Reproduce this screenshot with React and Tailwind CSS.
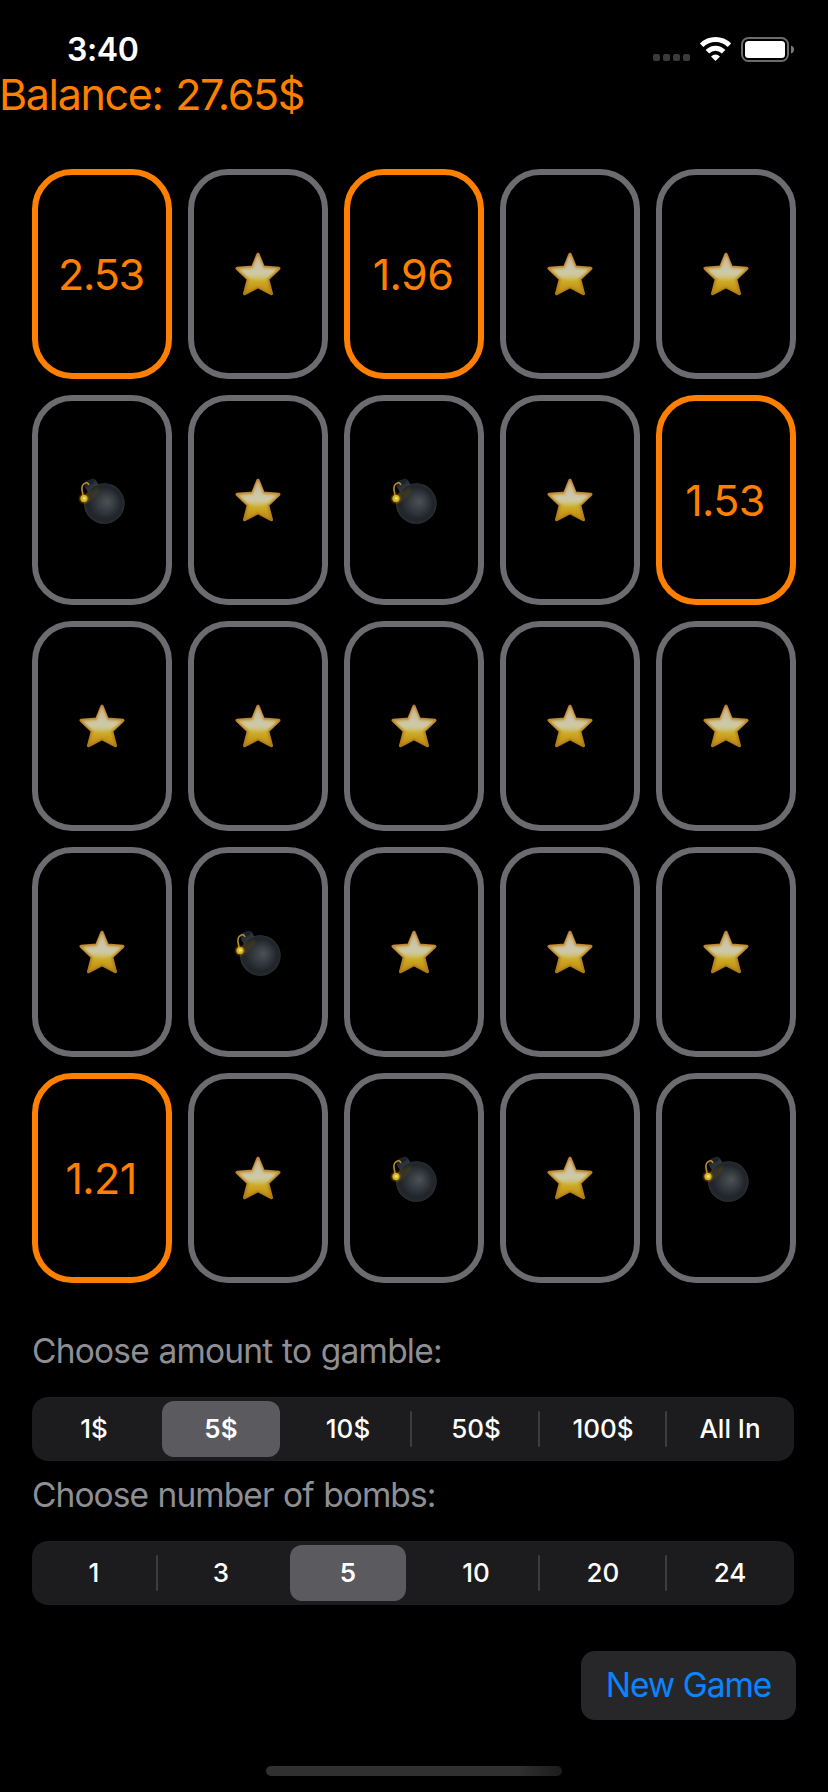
const rows = [
  ['2.53', 's', '1.96', 's', 's'],
  ['b', 's', 'b', 's', '1.53'],
  ['s', 's', 's', 's', 's'],
  ['s', 'b', 's', 's', 's'],
  ['1.21', 's', 'b', 's', 'b'],
];

function Star() {
  return (
    <svg viewBox="0 0 46 46" className="h-[46px] w-[46px]">
      <path d="M23 3.3 28.2 16.2 43.9 17.3 32.6 28 36.4 42.7 23 35.6 9.6 42.7 13.4 28 2.1 17.3 17.8 16.2Z" fill="url(#starRim)" stroke="url(#starRim)" strokeWidth="3.2" strokeLinejoin="round" />
      <path d="M23 4.5 28 17.2 42 18.2 31.6 28 35.2 41.6 23 34.8 10.8 41.6 14.4 28 4 18.2 18 17.2Z" fill="url(#starFill)" stroke="url(#starFill)" strokeWidth="1.4" filter="url(#soft)" />
      <path d="M23 5.5 27.8 17.8 40.5 19 31.2 27.3Q23 31.5 14.8 27.3L5.5 19 18.2 17.8Z" fill="url(#starGloss)" filter="url(#soft)" />
    </svg>
  );
}

function Bomb() {
  return (
    <svg viewBox="0 0 90 80" className="h-[80px] w-[90px] shrink-0 translate-x-[3px]">
      <path d="M24.5 23.5Q25 21 28 20.3L32 18.9Q34.5 18.4 36 20.6L39.5 26.2 29.5 34 25.2 28Z" fill="url(#neck)" />
      <ellipse cx="30" cy="22.4" rx="5" ry="2.3" transform="rotate(-24 30 22.4)" fill="#1b222a" />
      <circle cx="44.3" cy="43.5" r="20.3" fill="url(#ball)" />
      <path d="M27 31Q33 31 37.5 27L40 30Q35 38 28 43Z" fill="#5c4a16" opacity=".4" filter="url(#soft)" />
      <path d="M28.8 24.5Q27.4 21.8 24.6 23.4Q21.4 25.2 22 30L23.2 36" fill="none" stroke="#b58c33" strokeWidth="1.6" strokeLinecap="round" />
      <circle cx="24" cy="38.6" r="4.4" fill="#c0731c" opacity=".8" filter="url(#soft)" />
      <circle cx="24" cy="38.6" r="3.5" fill="#d6ba14" />
      <circle cx="24.3" cy="38.3" r="1.5" fill="#e6dfa0" />
    </svg>
  );
}

function Defs() {
  return (
    <svg className="absolute h-0 w-0">
      <defs>
        <filter id="soft" x="-20%" y="-20%" width="140%" height="140%"><feGaussianBlur stdDeviation=".8" /></filter>
        <linearGradient id="starRim" x1="0" y1="0" x2="0" y2="1">
          <stop offset="0" stopColor="#bd782c" /><stop offset=".4" stopColor="#bd832b" /><stop offset="1" stopColor="#a9781a" />
        </linearGradient>
        <linearGradient id="starFill" x1="0" y1="0" x2="0" y2="1">
          <stop offset="0" stopColor="#cfb57f" /><stop offset=".5" stopColor="#cdb960" /><stop offset=".7" stopColor="#ccaa24" /><stop offset="1" stopColor="#c08a12" />
        </linearGradient>
        <linearGradient id="starGloss" x1="0" y1="0" x2="0" y2="1">
          <stop offset="0" stopColor="#cbb992" /><stop offset=".5" stopColor="#cbc6ae" /><stop offset=".75" stopColor="#cfcaa4" /><stop offset="1" stopColor="#ccb640" />
        </linearGradient>
        <radialGradient id="ball" cx=".5" cy=".5" r=".5" fx=".58" fy=".45">
          <stop offset="0" stopColor="#4d5155" /><stop offset=".45" stopColor="#34393e" /><stop offset=".8" stopColor="#1f252b" /><stop offset=".95" stopColor="#23282c" /><stop offset="1" stopColor="#3a3c3d" />
        </radialGradient>
        <linearGradient id="neck" x1="0" y1="0" x2="1" y2="1">
          <stop offset="0" stopColor="#20262d" /><stop offset=".6" stopColor="#2e353e" /><stop offset="1" stopColor="#12161a" />
        </linearGradient>
      </defs>
    </svg>
  );
}

function Card({ value }) {
  const hidden = value === 's' || value === 'b';
  return (
    <div className={'flex h-[210px] w-[140px] items-center justify-center rounded-[40px] border-[6px] ' + (hidden ? 'border-[#6c6b70]' : 'border-[#ff8000]')}>
      {value === 's' && <Star />}
      {value === 'b' && <Bomb />}
      {!hidden && <span className={'pr-[2px] text-[43px] leading-none text-[#ff8000] ' + (value === '2.53' ? 'tracking-[-1.2px]' : 'tracking-[-0.6px]')}>{value}</span>}
    </div>
  );
}

function Segmented({ items, selected }) {
  return (
    <div className="flex h-16 w-[762px] rounded-[16px] bg-[#1c1c1e]">
      {items.map((item, i) => (
        <div key={item} className="relative flex w-[127px] items-center justify-center">
          {i > 0 && i !== selected && i !== selected + 1 && <div className={'absolute top-[14px] h-9 w-[2px] rounded-full bg-[#3d3d41] ' + (i < 4 ? '-left-[3px]' : '-left-[2px]')} />}
          {i === selected && <div className={'absolute top-1 h-14 rounded-[12px] bg-[#5b5a5f] ' + (i === 1 ? 'left-[3px] w-[118px]' : 'left-[4px] w-[116px]')} />}
          <span className={'relative text-[26px] leading-none text-white ' + (i < 3 ? 'pr-[3px] ' : 'pr-[1px] ') + (i === selected ? 'font-semibold' : 'font-[450]')}>{item}</span>
        </div>
      ))}
    </div>
  );
}

export default function App() {
  return (
    <div className="flex h-[1792px] w-[828px] flex-col overflow-hidden bg-black font-['Inter',sans-serif]">
      <Defs />
      <header className="flex h-[72px] items-end justify-between pl-[67px] pr-[34px]">
        <span className="text-[32px] font-semibold leading-[44px] tracking-[-0.4px] text-white">3:40</span>
        <svg viewBox="650 30 144 42" className="h-[42px] w-[144px]">
          <g fill="#3a3a3a">
            <rect x="653" y="54" width="7" height="7" rx="2" /><rect x="663" y="54" width="7" height="7" rx="2" />
            <rect x="673" y="54" width="7" height="7" rx="2" /><rect x="683" y="54" width="7" height="7" rx="2" />
          </g>
          <g fill="none" stroke="#fff" strokeWidth="5">
            <path d="M701.6 45.3Q707.5 39.6 715.5 39.6T729.4 45.3" />
            <path d="M707.4 51.8Q711 48.2 715.5 48.2T723.6 51.8" />
          </g>
          <path d="M711 56.5Q715.5 52.6 720 56.5L715.5 61Z" fill="#fff" />
          <rect x="742" y="38" width="46" height="23" rx="6.5" fill="none" stroke="#6b6b6b" strokeWidth="2" />
          <rect x="745" y="41" width="40" height="17" rx="3.5" fill="#fff" />
          <path d="M791 45.5Q794 46.5 794 49.5T791 53.5Z" fill="#7b7b7b" />
        </svg>
      </header>
      <div className="flex h-[97px] items-start">
        <h1 className="-ml-px whitespace-nowrap text-[43px] leading-[45px] tracking-[-1.35px] text-[#ff8000] [word-spacing:2px]">Balance: 27.65$</h1>
      </div>
      <main className="grid grid-cols-[repeat(5,140px)] gap-4 pl-8">
        {rows.flat().map((v, i) => <Card key={i} value={v} />)}
      </main>
      <section className="flex flex-col pl-8 pt-[45px] text-[#8e8e93]">
        <p className="h-[69px] whitespace-nowrap text-[33.5px] leading-[47px] tracking-[-0.8px] [word-spacing:1px]">Choose amount to gamble:</p>
        <Segmented items={['1$', '5$', '10$', '50$', '100$', 'All In']} selected={1} />
        <p className="h-20 whitespace-nowrap pt-[11px] text-[33.5px] leading-[47px] tracking-[-0.93px] [word-spacing:1px]">Choose number of bombs:</p>
        <Segmented items={['1', '3', '5', '10', '20', '24']} selected={2} />
      </section>
      <div className="flex justify-end pr-8 pt-[46px]">
        <button className="h-[69px] w-[215px] whitespace-nowrap rounded-[14px] bg-[#272729] text-[33.5px] leading-none tracking-[-1px] text-[#0a84ff]">New Game</button>
      </div>
      <div className="flex justify-center pt-[46px]">
        <div className="h-[10px] w-[296px] rounded-full bg-linear-to-r from-[#303030] from-85% to-[#1c1c1c]" />
      </div>
    </div>
  );
}
